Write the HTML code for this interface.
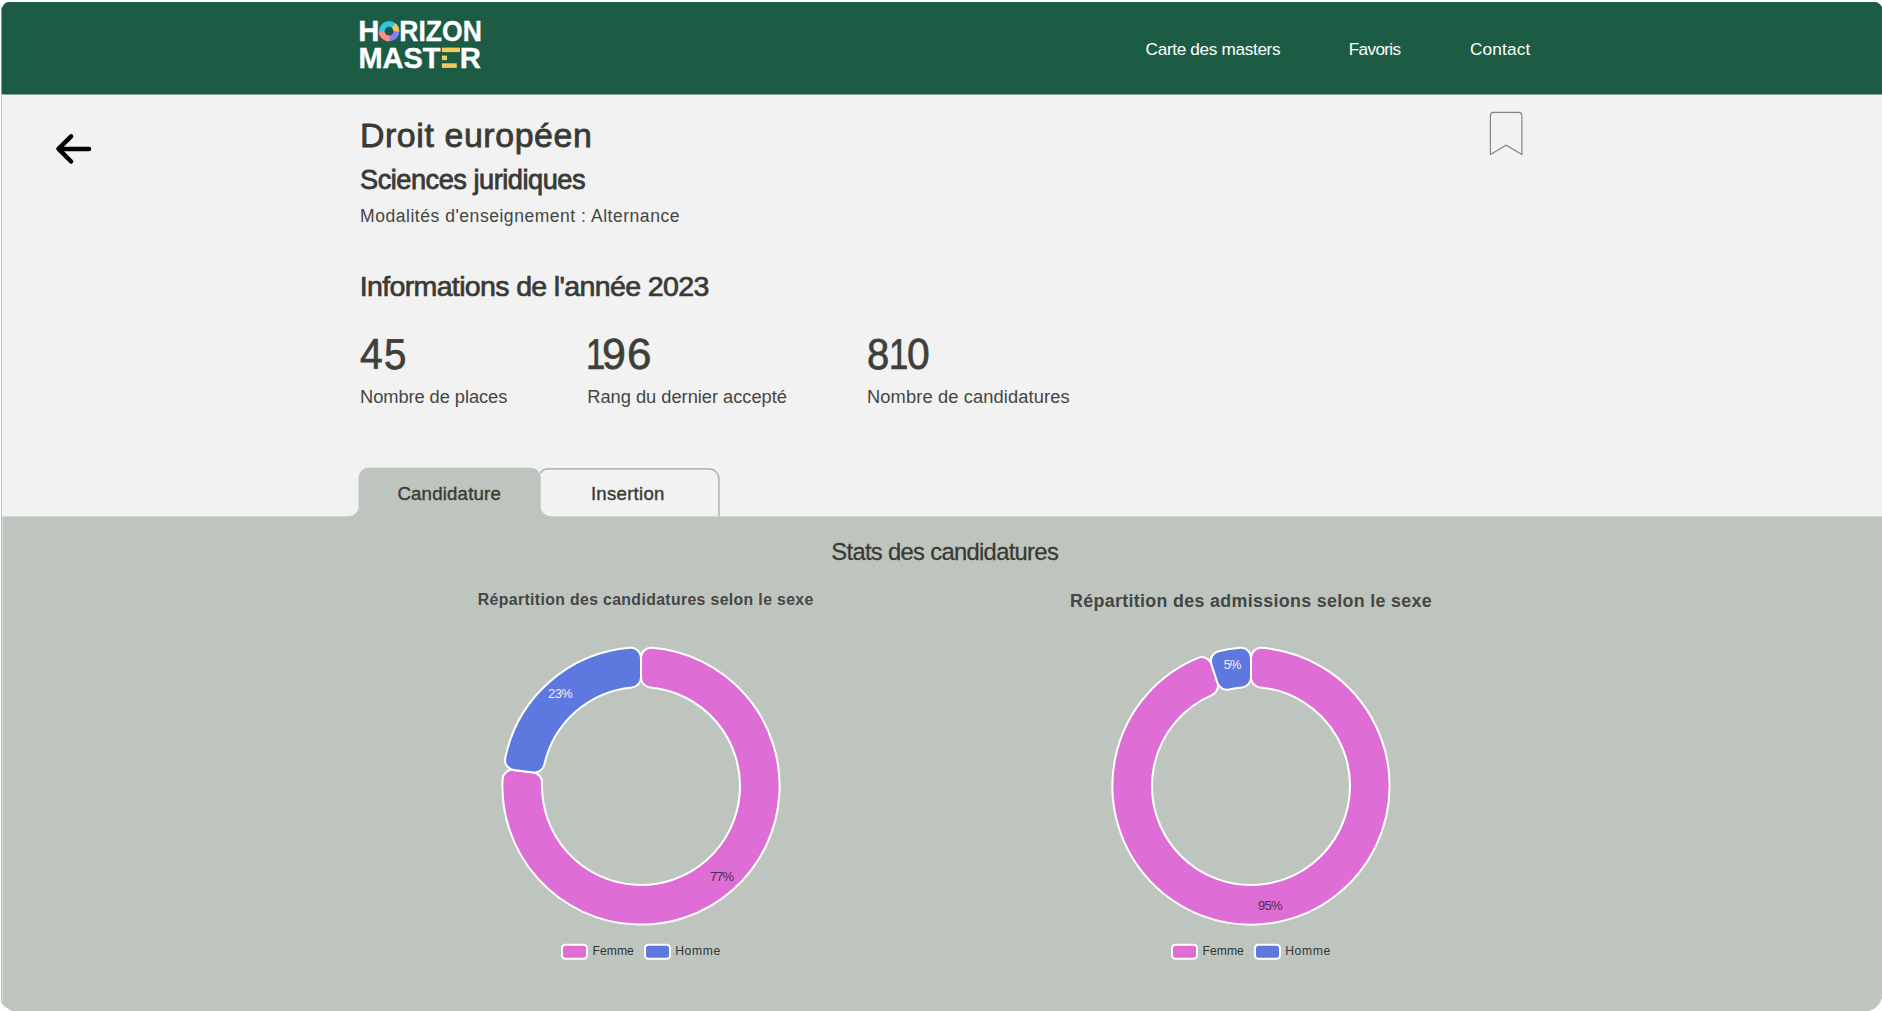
<!DOCTYPE html>
<html lang="fr"><head><meta charset="utf-8"><title>Horizon Master - Droit européen</title>
<style>
*{margin:0;padding:0;box-sizing:border-box}
html,body{width:1882px;height:1011px;overflow:hidden;background:#fff;font-family:"Liberation Sans",sans-serif;color:#3b3b36}
.t{position:absolute;white-space:nowrap;line-height:1;font-weight:normal;font-family:"Liberation Sans",sans-serif;background:none;border:0;text-decoration:none;display:block}
.dg{position:absolute;top:0;transform-origin:0 0;display:block}
svg{position:absolute;left:0;top:0}
</style></head><body>
<svg width="1882" height="1011" viewBox="0 0 1882 1011">
<!-- window frame, header band, stats band -->
<path d="M2 1012V9.1a7 7 0 0 1 7-7H1874.5a8 8 0 0 1 8 8V1012Z" fill="#f2f2f2"/>
<path d="M2 94.4V9.1a7 7 0 0 1 7-7H1874.5a8 8 0 0 1 8 8V94.4Z" fill="#1c5c45"/>
<rect x="2" y="516.4" width="1881" height="496" fill="#bec5be"/>
<rect x="1" y="8" width="1" height="86.4" fill="#2f5a49" fill-opacity=".6"/>
<rect x="1" y="94.4" width="1" height="908.6" fill="#000" fill-opacity=".26"/>
<rect x="2" y="94.4" width="1" height="422" fill="#fff" fill-opacity=".7"/>
<rect x="2" y="516.4" width="1" height="487" fill="#fff" fill-opacity=".35"/>
<!-- logo text -->
<g font-family="Liberation Sans, sans-serif" font-weight="bold" fill="#fff" font-size="29.3" stroke="#fff" stroke-width=".35">
<text id="lgH" x="358.3" y="41.1">H</text>
<text id="lgR" x="399.3" y="41.1" textLength="82.6" lengthAdjust="spacingAndGlyphs">RIZON</text>
<text id="lgM" x="358.4" y="68.1" textLength="82" lengthAdjust="spacingAndGlyphs">MAST</text>
<text id="lgR2" x="459.7" y="68.1">R</text>
</g>
<!-- O pie -->
<g transform="translate(389.1,31.2)">
<circle r="10.1" fill="#31c6e0"/>
<path d="M0 0L6.2 -8A10.1 10.1 0 0 1 10.1 0.6Z" fill="#f6c85a"/>
<path d="M0 0L10.1 0.6A10.1 10.1 0 0 1 0.6 10.1Z" fill="#8b7cf6"/>
<path d="M0 0L0.6 10.1A10.1 10.1 0 0 1 -10.1 0.2Z" fill="#fb8d8a"/>
<circle r="4.4" fill="#1c5c45"/>
</g>
<!-- E bars -->
<rect x="441.9" y="47.6" width="18.1" height="4.5" fill="#f6c85a"/>
<rect x="441.9" y="55.6" width="5.1" height="4.5" fill="#f6c85a"/>
<rect x="441.9" y="63.3" width="14.9" height="4.6" fill="#f6c85a"/>
<!-- back arrow -->
<path d="M89 148.9H58.6M71.1 136.3L58.5 148.9L71.1 161.5" fill="none" stroke="#000" stroke-width="4.5" stroke-linecap="round" stroke-linejoin="round"/>
<!-- bookmark -->
<path d="M1490.4 154.4V115.9a3.5 3.5 0 0 1 3.5-3.5h24.5a3.5 3.5 0 0 1 3.5 3.5V154.4L1506.15 145.2Z" fill="none" stroke="#80807c" stroke-width="1.15" stroke-linejoin="miter"/>
<!-- tabs -->
<path d="M540.3 473.4A9 9 0 0 1 548.6 468.8H708.9a10 10 0 0 1 10 10V516.5" fill="none" stroke="#b2bcb3" stroke-width="1.7"/>
<path d="M347.6 516.4a10.9 8.7 0 0 0 10.9-8.7V477.7a10 10 0 0 1 10-10H530.8a10 10 0 0 1 10 10V507.7a10.9 8.7 0 0 0 10.9 8.7V518H347.6Z" fill="#bec5be"/>
<!-- donuts -->
<path d="M651.78 647.82A138.60 138.60 0 1 1 502.56 779.37A10.00 10.00 0 0 1 513.80 769.93L533.32 772.40A10.00 10.00 0 0 1 542.06 782.66A99.00 99.00 0 1 0 650.08 687.42A10.00 10.00 0 0 1 641.00 677.46L641.00 657.79A10.00 10.00 0 0 1 651.78 647.82Z" fill="#de6dd6" stroke="#fff" stroke-width="2" stroke-linejoin="round"/>
<path d="M505.26 757.99A138.60 138.60 0 0 1 630.22 647.82A10.00 10.00 0 0 1 641.00 657.79L641.00 677.46A10.00 10.00 0 0 1 631.92 687.42A99.00 99.00 0 0 0 544.33 764.63A10.00 10.00 0 0 1 533.32 772.40L513.80 769.93A10.00 10.00 0 0 1 505.26 757.99Z" fill="#5d78de" stroke="#fff" stroke-width="2" stroke-linejoin="round"/>
<path d="M1261.78 647.82A138.60 138.60 0 1 1 1198.05 657.91A10.00 10.00 0 0 1 1211.38 664.06L1217.46 682.77A10.00 10.00 0 0 1 1211.90 695.05A99.00 99.00 0 1 0 1260.08 687.42A10.00 10.00 0 0 1 1251.00 677.46L1251.00 657.79A10.00 10.00 0 0 1 1261.78 647.82Z" fill="#de6dd6" stroke="#fff" stroke-width="2" stroke-linejoin="round"/>
<path d="M1218.55 651.25A138.60 138.60 0 0 1 1240.22 647.82A10.00 10.00 0 0 1 1251.00 657.79L1251.00 677.46A10.00 10.00 0 0 1 1241.92 687.42A99.00 99.00 0 0 0 1229.17 689.44A10.00 10.00 0 0 1 1217.46 682.77L1211.38 664.06A10.00 10.00 0 0 1 1218.55 651.25Z" fill="#5d78de" stroke="#fff" stroke-width="2" stroke-linejoin="round"/>
<!-- legend swatches -->
<g stroke="#fff" stroke-width="2">
<rect x="562" y="944.8" width="25" height="14" rx="3.5" fill="#de6dd6"/>
<rect x="645" y="944.8" width="25" height="14" rx="3.5" fill="#5d78de"/>
<rect x="1172" y="944.8" width="25" height="14" rx="3.5" fill="#de6dd6"/>
<rect x="1255" y="944.8" width="25" height="14" rx="3.5" fill="#5d78de"/>
</g>
<!-- window corner cut-outs -->
<path d="M0 1002.8H1.4Q5 1008.2 12.6 1011.2H0Z" fill="#fff"/>
<path d="M1882.2 996.8A18 18 0 0 1 1868.4 1011.2H1882.2Z" fill="#fff"/>
</svg>
<div id="texts">
<header><nav>
<a class="t" id="n1" style="left:1145.60px;top:41.37px;font-size:17.20px;letter-spacing:-0.339px;color:#fff">Carte des masters</a>
<a class="t" id="n2" style="left:1348.80px;top:41.09px;font-size:17.20px;letter-spacing:-0.675px;color:#fff">Favoris</a>
<a class="t" id="n3" style="left:1469.90px;top:41.37px;font-size:17.20px;letter-spacing:0.207px;color:#fff">Contact</a>
</nav></header>
<main>
<h1 class="t" id="h1" style="left:359.90px;top:119.05px;font-size:33.91px;letter-spacing:0.589px;color:#3a3a35;-webkit-text-stroke:.8px #3a3a35">Droit européen</h1>
<h2 class="t" id="h2" style="left:360.00px;top:166.16px;font-size:27.20px;letter-spacing:-0.486px;color:#3a3a35;-webkit-text-stroke:.8px #3a3a35">Sciences juridiques</h2>
<p class="t" id="mod" style="left:360.10px;top:208.15px;font-size:17.54px;letter-spacing:0.521px;color:#45453f">Modalités d'enseignement : Alternance</p>
<h3 class="t" id="h3" style="left:359.70px;top:271.73px;font-size:28.55px;letter-spacing:-0.657px;color:#3a3a35;-webkit-text-stroke:.7px #3a3a35">Informations de l'année 2023</h3>
<span class="t" id="v1" style="left:0;top:333.05px;font-size:43.3px;color:#3f3f39;-webkit-text-stroke:.7px #3f3f39"><span class="dg" style="left:360.46px;transform:rotate(.03deg) scale(0.9409,.995)">4</span><span class="dg" style="left:383.67px;transform:rotate(.03deg) scale(0.9318,.995)">5</span></span>
<span class="t" id="v2" style="left:0;top:333.05px;font-size:43.3px;color:#3f3f39;-webkit-text-stroke:.7px #3f3f39"><span class="dg" style="left:585.80px;transform:rotate(.03deg) scale(0.8,.995)">1</span><span class="dg" style="left:602.22px;transform:rotate(.03deg) scale(0.9905,.995)">9</span><span class="dg" style="left:626.67px;transform:rotate(.03deg) scale(1.0143,.995)">6</span></span>
<span class="t" id="v3" style="left:0;top:333.05px;font-size:43.3px;color:#3f3f39;-webkit-text-stroke:.7px #3f3f39"><span class="dg" style="left:867.48px;transform:rotate(.03deg) scale(0.9227,.995)">8</span><span class="dg" style="left:889.00px;transform:rotate(.03deg) scale(0.8,.995)">1</span><span class="dg" style="left:906.56px;transform:rotate(.03deg) scale(0.9409,.995)">0</span></span>
<span class="t" id="l1" style="left:360.00px;top:388.06px;font-size:18.30px;letter-spacing:-0.068px;color:#45453f">Nombre de places</span>
<span class="t" id="l2" style="left:587.30px;top:388.31px;font-size:18.30px;letter-spacing:-0.025px;color:#45453f">Rang du dernier accepté</span>
<span class="t" id="l3" style="left:867.00px;top:388.06px;font-size:18.30px;letter-spacing:0.121px;color:#45453f">Nombre de candidatures</span>
<button class="t" id="tab1" style="left:397.40px;top:484.82px;font-size:18.60px;letter-spacing:0.214px;color:#3b3b36;-webkit-text-stroke:.4px #3b3b36">Candidature</button>
<button class="t" id="tab2" style="left:590.90px;top:484.66px;font-size:18.60px;letter-spacing:0.278px;color:#3b3b36;-webkit-text-stroke:.4px #3b3b36">Insertion</button>
<h3 class="t" id="st" style="left:831.30px;top:540.21px;font-size:23.75px;letter-spacing:-0.673px;color:#3a3a35;-webkit-text-stroke:.3px #3a3a35">Stats des candidatures</h3>
<span class="t" id="c1" style="left:477.80px;top:591.93px;font-size:15.80px;letter-spacing:0.367px;color:#464646;font-weight:bold">Répartition des candidatures selon le sexe</span>
<span class="t" id="c2" style="left:1070.00px;top:592.81px;font-size:17.83px;letter-spacing:0.332px;color:#464646;font-weight:bold">Répartition des admissions selon le sexe</span>
<span class="t" id="p1" style="left:548.10px;top:687.88px;font-size:12.90px;letter-spacing:-0.619px;color:#f1f1f8">23%</span>
<span class="t" id="p2" style="left:709.90px;top:870.83px;font-size:12.90px;letter-spacing:-0.819px;color:#47304b">77%</span>
<span class="t" id="p3" style="left:1223.70px;top:659.20px;font-size:12.90px;letter-spacing:-0.969px;color:#f1f1f8">5%</span>
<span class="t" id="p4" style="left:1258.00px;top:899.85px;font-size:12.90px;letter-spacing:-0.719px;color:#47304b">95%</span>
<span class="t" id="g1" style="left:592.40px;top:945.35px;font-size:12.17px;letter-spacing:0.065px;color:#333">Femme</span>
<span class="t" id="g2" style="left:675.20px;top:945.00px;font-size:12.17px;letter-spacing:0.652px;color:#333">Homme</span>
<span class="t" id="g3" style="left:1202.40px;top:945.35px;font-size:12.17px;letter-spacing:0.065px;color:#333">Femme</span>
<span class="t" id="g4" style="left:1285.20px;top:945.00px;font-size:12.17px;letter-spacing:0.652px;color:#333">Homme</span>
</main>
</div>
</body></html>
